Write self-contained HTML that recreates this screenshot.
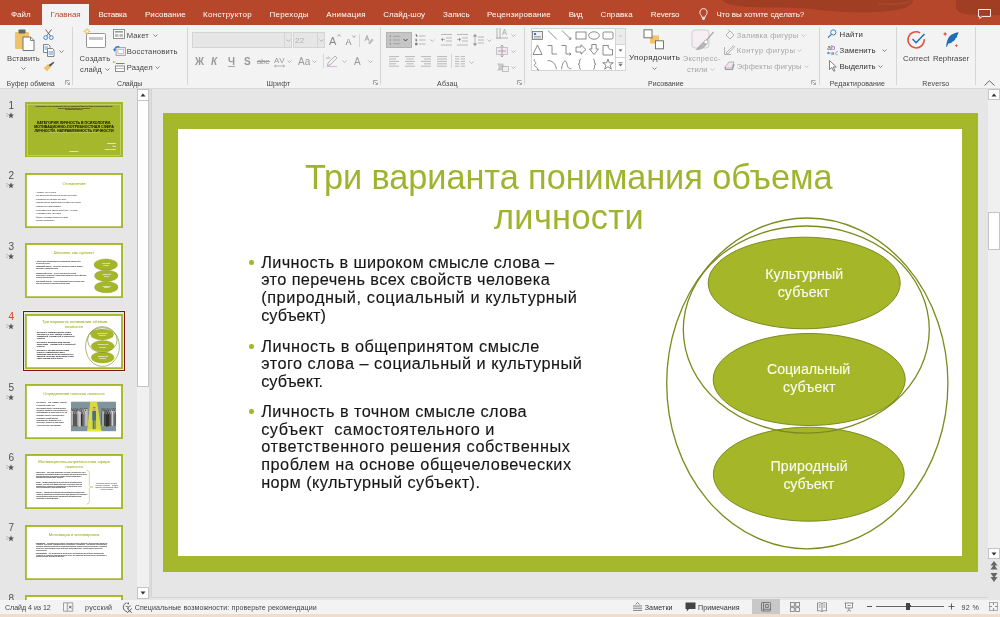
<!DOCTYPE html><html><head><meta charset="utf-8"><title>PowerPoint</title><style>
*{margin:0;padding:0;box-sizing:border-box}
html,body{width:1000px;height:617px;overflow:hidden;background:#e6e6e6;font-family:"Liberation Sans",sans-serif}
.a{position:absolute}
.t{position:absolute;white-space:pre;line-height:1}
#root{position:absolute;left:0;top:0;width:1000px;height:617px;will-change:transform}
svg{position:absolute;overflow:visible}
</style></head><body><div id="root">
<div class="a" style="left:0;top:0;width:1000px;height:25px;background:#b7472a"></div>
<svg style="left:0;top:0" width="1000" height="25" viewBox="0 0 1000 25">
<g fill="#000" fill-opacity="0.12">
<path d="M722 0 C726 5 740 7.5 765 7.5 C790 7.5 805 8 825 10.5 C850 13 880 13.5 900 9.5 C910 7 913 3 913 0 Z"/>
<path d="M956 0 H1000 V15 C990 15.5 975 15 965 14 C958 13 955 9 956 5 Z"/>
</g><path d="M878 3.5 C890 5 905 4 911 1" fill="none" stroke="#fff" stroke-opacity="0.06" stroke-width="1.5"/></svg>
<div class="a" style="left:42px;top:4px;width:47px;height:22px;background:#f3f3f3"></div>
<div class="a" style="left:0;top:25px;width:1000px;height:63px;background:#f3f3f3"></div>
<div class="a" style="left:0;top:88px;width:1000px;height:1px;background:#d9d9d9"></div>
<div class="t " style="letter-spacing:-0.024px;left:11.00px;top:10.93px;font-size:8px;color:#fff;">Файл</div>
<div class="t " style="letter-spacing:-0.189px;left:98.40px;top:10.93px;font-size:8px;color:#fff;">Вставка</div>
<div class="t " style="letter-spacing:0.038px;left:145.00px;top:10.93px;font-size:8px;color:#fff;">Рисование</div>
<div class="t " style="letter-spacing:0.298px;left:203.00px;top:10.93px;font-size:8px;color:#fff;">Конструктор</div>
<div class="t " style="letter-spacing:0.224px;left:269.50px;top:10.93px;font-size:8px;color:#fff;">Переходы</div>
<div class="t " style="letter-spacing:0.248px;left:326.30px;top:10.93px;font-size:8px;color:#fff;">Анимация</div>
<div class="t " style="letter-spacing:0.039px;left:383.30px;top:10.93px;font-size:8px;color:#fff;">Слайд-шоу</div>
<div class="t " style="letter-spacing:0.070px;left:443.00px;top:10.93px;font-size:8px;color:#fff;">Запись</div>
<div class="t " style="letter-spacing:0.140px;left:487.00px;top:10.93px;font-size:8px;color:#fff;">Рецензирование</div>
<div class="t " style="letter-spacing:-0.342px;left:568.80px;top:10.93px;font-size:8px;color:#fff;">Вид</div>
<div class="t " style="letter-spacing:0.118px;left:600.50px;top:10.93px;font-size:8px;color:#fff;">Справка</div>
<div class="t " style="letter-spacing:-0.199px;left:650.80px;top:10.93px;font-size:8px;color:#fff;">Reverso</div>
<div class="t " style="letter-spacing:-0.076px;left:50.60px;top:10.93px;font-size:8px;color:#b7472a;">Главная</div>
<div class="t " style="letter-spacing:-0.026px;left:716.40px;top:10.93px;font-size:8px;color:#fff;">Что вы хотите сделать?</div>
<svg style="left:699px;top:8px" width="10" height="12" viewBox="0 0 10 12"><path d="M4.5 0.6 C2.3 0.6 0.9 2.3 0.9 4.3 C0.9 6 2 6.9 2.6 8.1 L2.8 9.3 L6.2 9.3 L6.4 8.1 C7 6.9 8.1 6 8.1 4.3 C8.1 2.3 6.7 0.6 4.5 0.6 Z M3 10.4 L6 10.4 M3.5 11.4 L5.5 11.4" fill="none" stroke="#fff" stroke-width="0.9"/></svg>
<svg style="left:978px;top:9px" width="14" height="10" viewBox="0 0 14 10"><path d="M0.5 0.5 H12.5 V7.5 H4 L1.8 9.5 V7.5 H0.5 Z" fill="none" stroke="#fff" stroke-width="0.9"/></svg>
<svg style="left:14px;top:28px" width="22" height="24" viewBox="0 0 22 24">
<rect x="1" y="4" width="14" height="17" rx="1" fill="#f0c36b"/>
<rect x="4.5" y="1.5" width="7" height="4" rx="0.8" fill="#666"/>
<path d="M9 9 H16.5 L20 12.5 V22.5 H9 Z" fill="#fff" stroke="#666" stroke-width="0.9"/>
<path d="M16.5 9 V12.5 H20" fill="none" stroke="#666" stroke-width="0.8"/>
</svg>
<div class="t " style="letter-spacing:0.085px;left:7.00px;top:54.77px;font-size:7.6px;color:#444;">Вставить</div>
<svg style="left:21px;top:67.1px" width="5" height="3" viewBox="0 0 5 3"><path d="M0.5 0.5 L2.5 2.5 L4.5 0.5" fill="none" stroke="#666" stroke-width="0.8"/></svg>
<svg style="left:43px;top:29px" width="11" height="11" viewBox="0 0 11 11"><path d="M2.5 0.5 L7.5 7 M8.5 0.5 L3.5 7" stroke="#555" stroke-width="0.9" fill="none"/><circle cx="2.7" cy="8.6" r="1.9" fill="none" stroke="#2b7cd3" stroke-width="0.9"/><circle cx="8.3" cy="8.6" r="1.9" fill="none" stroke="#2b7cd3" stroke-width="0.9"/></svg>
<svg style="left:43px;top:44px" width="12" height="13" viewBox="0 0 12 13"><path d="M0.5 0.5 H5.5 L7 2 V8.5 H0.5 Z" fill="#fff" stroke="#666" stroke-width="0.8"/><path d="M4.5 4.5 H9.5 L11 6 V12.5 H4.5 Z" fill="#fff" stroke="#666" stroke-width="0.8"/><path d="M5.5 8 H10 M5.5 10 H10" stroke="#2b7cd3" stroke-width="0.8"/><path d="M1.5 3 H5 M1.5 5 H4" stroke="#2b7cd3" stroke-width="0.8"/></svg>
<svg style="left:59px;top:50.0px" width="5" height="3" viewBox="0 0 5 3"><path d="M0.5 0.5 L2.5 2.5 L4.5 0.5" fill="none" stroke="#666" stroke-width="0.8"/></svg>
<svg style="left:43px;top:61px" width="12" height="11" viewBox="0 0 12 11"><path d="M0.5 7 L5 3 L8 6 L4 10.5 Z" fill="#f0c36b"/><path d="M5.5 4 L10.5 0.8 L11.3 1.8 L7.2 5.8 Z" fill="#555"/></svg>
<div class="t " style="letter-spacing:0.029px;left:6.80px;top:79.77px;font-size:7px;color:#444;">Буфер обмена</div>
<svg style="left:65px;top:80px" width="5" height="5" viewBox="0 0 5 5"><path d="M0.5 4.5 V0.5 H4.5 M1.5 1.5 L4.2 4.2 M4.5 2.5 V4.5 H2.5" fill="none" stroke="#888" stroke-width="0.7"/></svg>
<div class="a" style="left:72px;top:27px;width:1px;height:58px;background:#d6d6d6"></div>
<svg style="left:83px;top:28px" width="24" height="21" viewBox="0 0 24 21">
<rect x="3.5" y="5.5" width="19" height="14" rx="1" fill="#fff" stroke="#888" stroke-width="0.9"/>
<rect x="6" y="9" width="14" height="3" fill="#c8c8c8"/>
<g stroke="#eeb64a" stroke-width="0.8"><path d="M4 0 V7 M0.5 3.5 H7.5 M1.5 1 L6.5 6 M6.5 1 L1.5 6"/></g><circle cx="4" cy="3.5" r="1.6" fill="#fff" stroke="#eeb64a" stroke-width="0.7"/>
</svg>
<div class="t " style="letter-spacing:0.290px;left:79.50px;top:54.77px;font-size:7.6px;color:#444;">Создать</div>
<div class="t " style="letter-spacing:0.119px;left:80.00px;top:65.77px;font-size:7.6px;color:#444;">слайд</div>
<svg style="left:104.5px;top:68.1px" width="5" height="3" viewBox="0 0 5 3"><path d="M0.5 0.5 L2.5 2.5 L4.5 0.5" fill="none" stroke="#666" stroke-width="0.8"/></svg>
<svg style="left:113px;top:29px" width="12" height="10" viewBox="0 0 12 10"><rect x="0.5" y="0.5" width="11" height="9" fill="#fff" stroke="#777" stroke-width="0.8"/><rect x="2" y="2" width="8" height="1.6" fill="#999"/><rect x="2" y="5" width="3.5" height="3" fill="#bbb"/><rect x="6.5" y="5" width="3.5" height="3" fill="#bbb"/></svg>
<div class="t " style="letter-spacing:0.150px;left:126.70px;top:31.77px;font-size:7.6px;color:#444;">Макет</div>
<svg style="left:152.5px;top:34.3px" width="5" height="3" viewBox="0 0 5 3"><path d="M0.5 0.5 L2.5 2.5 L4.5 0.5" fill="none" stroke="#666" stroke-width="0.8"/></svg>
<svg style="left:113px;top:45px" width="13" height="11" viewBox="0 0 13 11"><rect x="3" y="2.5" width="9.5" height="8" fill="#e8e8e8" stroke="#999" stroke-width="0.8"/><rect x="5" y="4.5" width="5.5" height="4" fill="#fff" stroke="#aaa" stroke-width="0.6"/><path d="M1.5 5.5 C1.5 2.5 3.5 1 6.5 1.8" fill="none" stroke="#2b7cd3" stroke-width="1.2"/><path d="M0 4 L1.6 6.8 L3.4 4.2 Z" fill="#2b7cd3"/></svg>
<div class="t " style="letter-spacing:0.205px;left:126.70px;top:47.77px;font-size:7.6px;color:#444;">Восстановить</div>
<svg style="left:113px;top:61px" width="12" height="11" viewBox="0 0 12 11"><rect x="2.5" y="5" width="9" height="5.5" fill="#fff" stroke="#777" stroke-width="0.8"/><path d="M0.5 1 H2.5 M0.5 0 V2" stroke="#f0a04b" stroke-width="0.9"/><path d="M3 2.5 H11.5" stroke="#e25b3a" stroke-width="1"/><path d="M3 7.5 H11" stroke="#999" stroke-width="0.7"/></svg>
<div class="t " style="letter-spacing:0.158px;left:126.70px;top:64.07px;font-size:7.6px;color:#444;">Раздел</div>
<svg style="left:155px;top:66.1px" width="5" height="3" viewBox="0 0 5 3"><path d="M0.5 0.5 L2.5 2.5 L4.5 0.5" fill="none" stroke="#666" stroke-width="0.8"/></svg>
<div class="t " style="letter-spacing:-0.152px;left:117.00px;top:79.77px;font-size:7px;color:#444;">Слайды</div>
<div class="a" style="left:187px;top:27px;width:1px;height:58px;background:#d6d6d6"></div>
<div class="a" style="left:192px;top:32px;width:100px;height:16px;background:#e6e6e6;border:1px solid #d4d4d4"></div>
<div class="a" style="left:283.5px;top:32px;width:1px;height:16px;background:#d4d4d4"></div>
<svg style="left:285.8px;top:39.0px" width="5" height="3" viewBox="0 0 5 3"><path d="M0.5 0.5 L2.5 2.5 L4.5 0.5" fill="none" stroke="#aaa" stroke-width="0.8"/></svg>
<div class="a" style="left:293px;top:32px;width:31.6px;height:16px;background:#e6e6e6;border:1px solid #d4d4d4"></div>
<div class="a" style="left:316.5px;top:32px;width:1px;height:16px;background:#d4d4d4"></div>
<svg style="left:318.5px;top:39.0px" width="5" height="3" viewBox="0 0 5 3"><path d="M0.5 0.5 L2.5 2.5 L4.5 0.5" fill="none" stroke="#aaa" stroke-width="0.8"/></svg>
<div class="t " style="letter-spacing:0.294px;left:295.00px;top:37.43px;font-size:8px;color:#b0b0b0;">22</div>
<div class="t " style="letter-spacing:1.256px;left:329.00px;top:36.39px;font-size:11px;color:#888;">A</div>
<div class="t " style="letter-spacing:1.584px;left:345.50px;top:38.08px;font-size:9px;color:#888;">A</div>
<svg style="left:337px;top:34px" width="4" height="3"><path d="M0.5 2.5 L2 0.5 L3.5 2.5" fill="none" stroke="#888" stroke-width="0.7"/></svg>
<svg style="left:352px;top:35px" width="4" height="3"><path d="M0.5 0.5 L2 2.5 L3.5 0.5" fill="none" stroke="#888" stroke-width="0.7"/></svg>
<div class="a" style="left:358.5px;top:34px;width:1px;height:13px;background:#d6d6d6"></div>
<svg style="left:364px;top:35px" width="10" height="10" viewBox="0 0 10 10"><path d="M1 6 L3 0.5 L5 6 M1.8 4 H4.2" fill="none" stroke="#999" stroke-width="0.8"/><path d="M4 8 L8 3.5 L9.5 5 L6 9.5 Z" fill="#bbb"/></svg>
<div class="t " style="letter-spacing:1.553px;left:195.00px;top:57.23px;font-size:10px;color:#999;font-weight:700;">Ж</div>
<div class="t " style="letter-spacing:2.444px;left:211.00px;top:57.23px;font-size:10px;color:#999;font-weight:700;font-style:italic;">К</div>
<div class="t " style="letter-spacing:0.369px;left:228.00px;top:56.53px;font-size:10px;color:#999;font-weight:700;">Ч</div>
<div class="a" style="left:228px;top:65.6px;width:7px;height:0.8px;background:#aaa"></div>
<div class="t " style="letter-spacing:0.428px;left:244.00px;top:57.23px;font-size:10px;color:#999;font-weight:700;">S</div>
<div class="t " style="letter-spacing:-0.380px;left:257.00px;top:57.93px;font-size:8px;color:#999;">abe</div>
<div class="a" style="left:256.5px;top:61px;width:13px;height:0.8px;background:#999"></div>
<div class="t " style="letter-spacing:0.522px;left:274.00px;top:56.93px;font-size:8px;color:#999;">AV</div>
<svg style="left:274px;top:64px" width="11" height="4" viewBox="0 0 11 4"><path d="M0.5 2 H10.5 M0.5 2 L2 0.8 M0.5 2 L2 3.2 M10.5 2 L9 0.8 M10.5 2 L9 3.2" fill="none" stroke="#999" stroke-width="0.7"/></svg>
<svg style="left:287px;top:60.3px" width="5" height="3" viewBox="0 0 5 3"><path d="M0.5 0.5 L2.5 2.5 L4.5 0.5" fill="none" stroke="#aaa" stroke-width="0.8"/></svg>
<div class="t " style="letter-spacing:-0.034px;left:298.00px;top:57.23px;font-size:10px;color:#999;">Aa</div>
<svg style="left:312.4px;top:60.3px" width="5" height="3" viewBox="0 0 5 3"><path d="M0.5 0.5 L2.5 2.5 L4.5 0.5" fill="none" stroke="#aaa" stroke-width="0.8"/></svg>
<div class="a" style="left:322.6px;top:54px;width:1px;height:14px;background:#d6d6d6"></div>
<svg style="left:326px;top:55px" width="12" height="12" viewBox="0 0 12 12"><path d="M2 8 L9 1 L11 3 L4 10 L1.5 10.5 Z" fill="none" stroke="#aaa" stroke-width="0.9"/><path d="M0.5 11.5 H11" stroke="#d9b8d9" stroke-width="1"/><text x="0" y="4" font-size="4" fill="#aaa" font-family="Liberation Sans">ab</text></svg>
<svg style="left:342px;top:60.3px" width="5" height="3" viewBox="0 0 5 3"><path d="M0.5 0.5 L2.5 2.5 L4.5 0.5" fill="none" stroke="#aaa" stroke-width="0.8"/></svg>
<div class="t " style="letter-spacing:1.428px;left:354.00px;top:57.23px;font-size:10px;color:#999;">A</div>
<svg style="left:368px;top:60.3px" width="5" height="3" viewBox="0 0 5 3"><path d="M0.5 0.5 L2.5 2.5 L4.5 0.5" fill="none" stroke="#aaa" stroke-width="0.8"/></svg>
<div class="t " style="letter-spacing:0.192px;left:266.40px;top:79.77px;font-size:7px;color:#444;">Шрифт</div>
<svg style="left:373px;top:80px" width="5" height="5" viewBox="0 0 5 5"><path d="M0.5 4.5 V0.5 H4.5 M1.5 1.5 L4.2 4.2 M4.5 2.5 V4.5 H2.5" fill="none" stroke="#888" stroke-width="0.7"/></svg>
<div class="a" style="left:380.4px;top:27px;width:1px;height:58px;background:#d6d6d6"></div>
<div class="a" style="left:386px;top:32px;width:26px;height:16px;background:#c6c6c6;border:1px solid #b3b3b3"></div>
<svg style="left:388px;top:34px" width="22" height="12" viewBox="0 0 22 12"><g fill="#999"><rect x="1.5" y="1.5" width="1.6" height="1.6"/><rect x="1.5" y="5.2" width="1.6" height="1.6"/><rect x="1.5" y="8.9" width="1.6" height="1.6"/></g><g stroke="#999" stroke-width="0.8"><path d="M5 2.3 H12 M5 6 H12 M5 9.7 H12"/></g><path d="M15.5 5 L17.5 7 L19.5 5" fill="none" stroke="#444" stroke-width="1"/></svg>
<svg style="left:414.5px;top:34px" width="11" height="12" viewBox="0 0 11 12"><g stroke="#aaa" stroke-width="0.8"><path d="M4 2 H10.5 M4 6 H10.5 M4 10 H10.5 M0.5 0.8 H2 V3 M0.3 5 H2 L0.5 7 H2.3 M0.5 9 H2.2 V11 H0.5 M0.5 10 H2"/></g></svg>
<svg style="left:430.4px;top:39.3px" width="5" height="3" viewBox="0 0 5 3"><path d="M0.5 0.5 L2.5 2.5 L4.5 0.5" fill="none" stroke="#aaa" stroke-width="0.8"/></svg>
<svg style="left:441px;top:34px" width="11" height="12" viewBox="0 0 11 12"><g stroke="#aaa" stroke-width="0.8"><path d="M0 0.5 H11 M5 4 H11 M5 7 H11 M0 11 H11 M4 5.5 H0.8"/></g><path d="M0 5.5 L2 3.8 L2 7.2 Z" fill="#888"/></svg>
<svg style="left:457px;top:34px" width="11" height="12" viewBox="0 0 11 12"><g stroke="#aaa" stroke-width="0.8"><path d="M0 0.5 H11 M5 4 H11 M5 7 H11 M0 11 H11 M0 5.5 H3"/></g><path d="M4 5.5 L2 3.8 L2 7.2 Z" fill="#888"/></svg>
<svg style="left:473px;top:34px" width="11" height="12" viewBox="0 0 11 12"><g stroke="#aaa" stroke-width="0.8"><path d="M5 3 H11 M5 6 H11 M5 9 H11 M2 1.5 V10.5"/></g><path d="M2 0 L0 2.5 H4 Z M2 12 L0 9.5 H4 Z" fill="#888"/></svg>
<svg style="left:486.7px;top:39.3px" width="5" height="3" viewBox="0 0 5 3"><path d="M0.5 0.5 L2.5 2.5 L4.5 0.5" fill="none" stroke="#aaa" stroke-width="0.8"/></svg>
<svg style="left:389px;top:55.5px" width="10" height="11" viewBox="0 0 10 11"><g stroke="#aaa" stroke-width="0.8"><path d="M0 0.6 H10"/><path d="M0 3.0 H7"/><path d="M0 5.3999999999999995 H10"/><path d="M0 7.799999999999999 H7"/><path d="M0 10.2 H10"/></g></svg>
<svg style="left:405px;top:55.5px" width="10" height="11" viewBox="0 0 10 11"><g stroke="#aaa" stroke-width="0.8"><path d="M0.0 0.6 H10.0"/><path d="M1.5 3.0 H8.5"/><path d="M0.0 5.3999999999999995 H10.0"/><path d="M1.5 7.799999999999999 H8.5"/><path d="M0.0 10.2 H10.0"/></g></svg>
<svg style="left:421px;top:55.5px" width="10" height="11" viewBox="0 0 10 11"><g stroke="#aaa" stroke-width="0.8"><path d="M0 0.6 H10"/><path d="M3 3.0 H10"/><path d="M0 5.3999999999999995 H10"/><path d="M3 7.799999999999999 H10"/><path d="M0 10.2 H10"/></g></svg>
<svg style="left:436.5px;top:55.5px" width="10" height="11" viewBox="0 0 10 11"><g stroke="#aaa" stroke-width="0.8"><path d="M0 0.6 H10"/><path d="M0 3.0 H10"/><path d="M0 5.3999999999999995 H10"/><path d="M0 7.799999999999999 H10"/><path d="M0 10.2 H10"/></g></svg>
<div class="a" style="left:450.5px;top:54px;width:1px;height:14px;background:#d6d6d6"></div>
<svg style="left:455px;top:55.5px" width="10" height="11" viewBox="0 0 10 11"><g stroke="#aaa" stroke-width="0.8"><path d="M0 0.6 H4.3 M0 3 H4.3 M0 5.4 H4.3 M0 7.8 H4.3 M0 10.2 H4.3 M5.7 0.6 H10 M5.7 3 H10 M5.7 5.4 H10 M5.7 7.8 H10 M5.7 10.2 H10"/></g></svg>
<svg style="left:468.6px;top:60.8px" width="5" height="3" viewBox="0 0 5 3"><path d="M0.5 0.5 L2.5 2.5 L4.5 0.5" fill="none" stroke="#aaa" stroke-width="0.8"/></svg>
<svg style="left:496px;top:28px" width="12" height="12" viewBox="0 0 12 12"><g stroke="#aaa" stroke-width="0.9"><path d="M1 0 V11 M4 0 V11 M0 10 H12"/></g><path d="M6.5 7 L8.5 1 L10.5 7 M7.2 5 H9.8" fill="none" stroke="#aaa" stroke-width="0.8"/></svg>
<svg style="left:511px;top:33.8px" width="5" height="3" viewBox="0 0 5 3"><path d="M0.5 0.5 L2.5 2.5 L4.5 0.5" fill="none" stroke="#aaa" stroke-width="0.8"/></svg>
<svg style="left:496px;top:45px" width="12" height="12" viewBox="0 0 12 12"><rect x="0.5" y="2.5" width="11" height="7" fill="#f3e6f0" stroke="#bbb" stroke-width="0.8"/><path d="M6 0 V12 M4.5 1.5 L6 0 L7.5 1.5 M4.5 10.5 L6 12 L7.5 10.5 M2 6 H10" fill="none" stroke="#999" stroke-width="0.8"/></svg>
<svg style="left:511px;top:49.8px" width="5" height="3" viewBox="0 0 5 3"><path d="M0.5 0.5 L2.5 2.5 L4.5 0.5" fill="none" stroke="#aaa" stroke-width="0.8"/></svg>
<svg style="left:496.5px;top:63px" width="12" height="9" viewBox="0 0 12 9"><path d="M0 0.5 H6 L8 4 L6 7.5 H0 L2 4 Z" fill="#c8c8c8"/><rect x="5.5" y="3.5" width="6" height="5" fill="#eee" stroke="#aaa" stroke-width="0.7"/></svg>
<svg style="left:511px;top:66.3px" width="5" height="3" viewBox="0 0 5 3"><path d="M0.5 0.5 L2.5 2.5 L4.5 0.5" fill="none" stroke="#aaa" stroke-width="0.8"/></svg>
<div class="t " style="letter-spacing:0.240px;left:437.00px;top:79.77px;font-size:7px;color:#444;">Абзац</div>
<svg style="left:516.5px;top:80px" width="5" height="5" viewBox="0 0 5 5"><path d="M0.5 4.5 V0.5 H4.5 M1.5 1.5 L4.2 4.2 M4.5 2.5 V4.5 H2.5" fill="none" stroke="#888" stroke-width="0.7"/></svg>
<div class="a" style="left:524.4px;top:27px;width:1px;height:58px;background:#d6d6d6"></div>
<div class="a" style="left:530.8px;top:28.3px;width:95px;height:42.7px;background:#fff;border:1px solid #d4d4d4"></div>
<div class="a" style="left:615.3px;top:28.3px;width:1px;height:42.7px;background:#d4d4d4"></div>
<div class="a" style="left:616.3px;top:29.3px;width:8.5px;height:14.5px;background:#ececec"></div>
<div class="a" style="left:616.3px;top:43.5px;width:8.5px;height:1px;background:#d4d4d4"></div>
<div class="a" style="left:616.3px;top:57.2px;width:8.5px;height:1px;background:#d4d4d4"></div>
<svg style="left:618px;top:34px" width="5" height="3"><path d="M0.5 2.5 L2.5 0.5 L4.5 2.5" fill="#ccc"/></svg>
<svg style="left:618px;top:49px" width="5" height="3"><path d="M0.5 0.5 L2.5 2.5 L4.5 0.5 Z" fill="#555"/></svg>
<svg style="left:618px;top:61.5px" width="5" height="5"><path d="M0.5 0.8 H4.5" stroke="#555" stroke-width="0.8"/><path d="M0.5 2.3 L2.5 4.3 L4.5 2.3 Z" fill="#555"/></svg>
<svg style="left:531px;top:28px" width="85" height="43" viewBox="0 0 85 43"><g fill="none" stroke="#666" stroke-width="0.75">
<rect x="1.5" y="3.5" width="10" height="8" fill="#eee"/><rect x="3" y="5" width="2" height="2" fill="#2b7cd3" stroke="none"/><path d="M3 8.5 H10 M3 10 H10" stroke="#999"/>
<path d="M17 2.5 L26 11.5"/>
<path d="M31 2.5 L39.5 11 M37.8 11.3 L39.8 11.3 L39.8 9.3"/>
<rect x="45" y="4" width="10" height="7"/>
<ellipse cx="63" cy="7.5" rx="5.3" ry="3.7"/>
<rect x="72" y="4" width="10" height="7" rx="1.2"/>
<g transform="translate(0,1)"><path d="M2 25.5 L6.5 16 L11 25.5 Z"/>
<path d="M16.5 16.5 H21 V25 H26"/>
<path d="M30.5 16.5 H35 V25 H40 M38.5 23.5 L40 25 L38.5 26.5"/>
<path d="M45 18 H50 V15.8 L55 20.5 L50 25.2 V23 H45 Z"/>
<path d="M60.8 15.5 H65.2 V20 H67.5 L63 25.5 L58.5 20 H60.8 Z"/>
<path d="M72 16.5 H77.5 C76.5 19 78.5 21 81.5 20.5 V26 H72 Z"/>
</g>
<g transform="translate(0,1.2)"><path d="M4 30 C1 32 7 33 4 35 C1 37 8 38 6 40 M6 40 L8 41"/>
<path d="M16.5 31.5 C21 31 24.5 34 25.5 40"/>
<path d="M30.5 40 C32 30 35 30 36 35 C37 40 39 40 40.5 39"/>
<path d="M50 30 C48.5 30 48.5 31 48.5 33 C48.5 35 47.5 35 47 35 C47.5 35 48.5 35 48.5 37 C48.5 39 48.5 40 50 40"/>
<path d="M62 30 C63.5 30 63.5 31 63.5 33 C63.5 35 64.5 35 65 35 C64.5 35 63.5 35 63.5 37 C63.5 39 63.5 40 62 40"/>
<path d="M77 29.8 L78.3 33.6 L82.3 33.6 L79.1 36 L80.3 39.9 L77 37.5 L73.7 39.9 L74.9 36 L71.7 33.6 L75.7 33.6 Z"/>
</g></g></svg>
<svg style="left:643px;top:29px" width="22" height="21" viewBox="0 0 22 21"><rect x="7" y="6.5" width="9" height="8" fill="#f0c36b"/><rect x="1" y="0.8" width="8" height="8" fill="#fff" stroke="#666" stroke-width="0.9"/><rect x="12.5" y="11.8" width="8" height="8" fill="#fff" stroke="#666" stroke-width="0.9"/></svg>
<div class="t " style="letter-spacing:0.329px;left:629.00px;top:54.43px;font-size:8px;color:#333;">Упорядочить</div>
<svg style="left:652px;top:67.2px" width="5" height="3" viewBox="0 0 5 3"><path d="M0.5 0.5 L2.5 2.5 L4.5 0.5" fill="none" stroke="#666" stroke-width="0.8"/></svg>
<svg style="left:691px;top:29px" width="24" height="22" viewBox="0 0 24 22"><rect x="1" y="1" width="17" height="18" rx="3" fill="#f6eef3" stroke="#ccc" stroke-width="0.9"/><path d="M22.5 3 L14 13 M14 13 C11 13.5 10 16 6 20.5 C12 20 14 17 15.5 14.5" fill="#bbb" stroke="#aaa" stroke-width="1.2"/><circle cx="15" cy="13" r="2" fill="#fff" stroke="#aaa" stroke-width="0.8"/></svg>
<div class="t " style="letter-spacing:0.282px;left:682.70px;top:54.77px;font-size:7.6px;color:#a6a6a6;">Экспресс-</div>
<div class="t " style="letter-spacing:0.099px;left:687.00px;top:65.77px;font-size:7.6px;color:#a6a6a6;">стили</div>
<svg style="left:710px;top:68.1px" width="5" height="3" viewBox="0 0 5 3"><path d="M0.5 0.5 L2.5 2.5 L4.5 0.5" fill="none" stroke="#bbb" stroke-width="0.8"/></svg>
<svg style="left:724.5px;top:28.5px" width="10" height="11" viewBox="0 0 10 11"><path d="M1 6 L5 2 L9 6 L5 10 Z" fill="none" stroke="#aaa" stroke-width="0.9"/><path d="M3 0.5 L5 2.5" stroke="#aaa" stroke-width="0.9"/></svg>
<div class="t " style="letter-spacing:0.277px;left:736.70px;top:31.57px;font-size:7.6px;color:#a6a6a6;">Заливка фигуры</div>
<svg style="left:801px;top:34.099999999999994px" width="5" height="3" viewBox="0 0 5 3"><path d="M0.5 0.5 L2.5 2.5 L4.5 0.5" fill="none" stroke="#bbb" stroke-width="0.8"/></svg>
<svg style="left:723.5px;top:44.5px" width="11" height="10" viewBox="0 0 11 10"><path d="M0.5 2 V9.5 H7" fill="none" stroke="#aaa" stroke-width="0.9"/><path d="M2 8 L9.5 0.8 L10.5 1.8 L3.5 9 Z" fill="#fff" stroke="#999" stroke-width="0.8"/></svg>
<div class="t " style="letter-spacing:0.424px;left:736.70px;top:46.87px;font-size:7.6px;color:#a6a6a6;">Контур фигуры</div>
<svg style="left:797px;top:49.3px" width="5" height="3" viewBox="0 0 5 3"><path d="M0.5 0.5 L2.5 2.5 L4.5 0.5" fill="none" stroke="#bbb" stroke-width="0.8"/></svg>
<svg style="left:723.5px;top:60.5px" width="11" height="10" viewBox="0 0 11 10"><path d="M1 6 L5 1 H10 L8 7 H2 Z" fill="#f3e6f0" stroke="#aaa" stroke-width="0.8"/><path d="M1 6 L1.5 8.5 H8.5 L10 3" fill="none" stroke="#999" stroke-width="1.2"/></svg>
<div class="t " style="letter-spacing:0.123px;left:736.70px;top:63.07px;font-size:7.6px;color:#a6a6a6;">Эффекты фигуры</div>
<svg style="left:804px;top:65.3px" width="5" height="3" viewBox="0 0 5 3"><path d="M0.5 0.5 L2.5 2.5 L4.5 0.5" fill="none" stroke="#bbb" stroke-width="0.8"/></svg>
<div class="t " style="letter-spacing:0.042px;left:648.00px;top:79.77px;font-size:7px;color:#444;">Рисование</div>
<svg style="left:810.5px;top:80px" width="5" height="5" viewBox="0 0 5 5"><path d="M0.5 4.5 V0.5 H4.5 M1.5 1.5 L4.2 4.2 M4.5 2.5 V4.5 H2.5" fill="none" stroke="#888" stroke-width="0.7"/></svg>
<div class="a" style="left:818.5px;top:27px;width:1px;height:58px;background:#d6d6d6"></div>
<svg style="left:827px;top:28.5px" width="10" height="10" viewBox="0 0 10 10"><circle cx="6.3" cy="3.4" r="2.6" fill="none" stroke="#2e75b6" stroke-width="0.9"/><path d="M4.4 5.3 L1 8.7" stroke="#2e75b6" stroke-width="1.2"/></svg>
<div class="t " style="letter-spacing:0.238px;left:839.60px;top:31.30px;font-size:7.8px;color:#333;">Найти</div>
<svg style="left:826.5px;top:43.5px" width="12" height="12" viewBox="0 0 12 12"><text x="0.3" y="6.3" font-size="6.5" fill="#555" font-family="Liberation Sans">a</text><text x="4" y="6.3" font-size="7.5" fill="#7b4fb5" font-family="Liberation Sans">b</text><text x="4" y="11" font-size="6" fill="#666" font-family="Liberation Sans">a</text><path d="M10.8 7.6 C9.2 7.4 8.6 8.5 8.6 9.3 C8.6 10.2 9.4 11 10.8 10.8" fill="none" stroke="#5b9bd5" stroke-width="0.8"/><path d="M0.5 9 H3.5 M0.5 9 L2 8 M0.5 9 L2 10" fill="none" stroke="#2e75b6" stroke-width="0.8"/></svg>
<div class="t " style="letter-spacing:0.136px;left:839.60px;top:47.40px;font-size:7.8px;color:#333;">Заменить</div>
<svg style="left:882.4px;top:49.3px" width="5" height="3" viewBox="0 0 5 3"><path d="M0.5 0.5 L2.5 2.5 L4.5 0.5" fill="none" stroke="#666" stroke-width="0.8"/></svg>
<svg style="left:828.5px;top:59.5px" width="8" height="12" viewBox="0 0 8 12"><path d="M0.5 0.5 V9.5 L2.8 7.5 L4.8 11.3 L6 10.7 L4.2 7 H7.3 Z" fill="#fff" stroke="#666" stroke-width="0.8"/></svg>
<div class="t " style="letter-spacing:0.002px;left:839.60px;top:63.10px;font-size:7.8px;color:#333;">Выделить</div>
<svg style="left:877.8px;top:65.3px" width="5" height="3" viewBox="0 0 5 3"><path d="M0.5 0.5 L2.5 2.5 L4.5 0.5" fill="none" stroke="#666" stroke-width="0.8"/></svg>
<div class="t " style="letter-spacing:0.144px;left:829.80px;top:79.77px;font-size:7px;color:#444;">Редактирование</div>
<div class="a" style="left:895.5px;top:27px;width:1px;height:58px;background:#d6d6d6"></div>
<svg style="left:906px;top:29.5px" width="20" height="20" viewBox="0 0 20 20"><path d="M14.15 2.79 A8.1 8.1 0 1 0 18.17 9.09" fill="none" stroke="#e0513a" stroke-width="1.5"/><path d="M6.6 9.1 L10.1 12.7 L18.5 3.9" fill="none" stroke="#1f6fb6" stroke-width="1.5"/></svg>
<div class="t " style="letter-spacing:0.156px;left:902.90px;top:55.10px;font-size:7.8px;color:#444;">Correct</div>
<svg style="left:941px;top:30px" width="20" height="19" viewBox="0 0 20 19"><path d="M5.2 16.8 C5.6 11 7.2 6.2 10.8 4.4 C12.8 3.4 15.4 2.6 17.5 2.2 C17.3 3.8 16.9 4.8 16 5.5 C16.4 6.7 15.7 8 14.3 8.6 C14.4 9.9 13.3 11.1 11.6 11.4 C10.9 12.7 9.1 13.5 7.4 13.4 C6.8 14.6 6.3 15.8 5.9 16.9 Z" fill="#1f6fb6"/><path d="M4.1 1.8 L4.8 3.3 L6.3 4 L4.8 4.7 L4.1 6.2 L3.4 4.7 L1.9 4 L3.4 3.3 Z" fill="#e0513a"/><path d="M15.3 14 L15.9 15 L16.9 15.6 L15.9 16.2 L15.3 17.2 L14.7 16.2 L13.7 15.6 L14.7 15 Z" fill="#e0513a"/></svg>
<div class="t " style="letter-spacing:-0.013px;left:932.90px;top:55.10px;font-size:7.8px;color:#444;">Rephraser</div>
<div class="t " style="letter-spacing:0.137px;left:922.30px;top:79.77px;font-size:7px;color:#444;">Reverso</div>
<div class="a" style="left:975px;top:27px;width:1px;height:58px;background:#d6d6d6"></div>
<svg style="left:984px;top:80px" width="11" height="6" viewBox="0 0 11 6"><path d="M0.5 5.5 L5.5 0.8 L10.5 5.5" fill="none" stroke="#555" stroke-width="0.9"/></svg>
<div class="a" style="left:163px;top:113px;width:815px;height:458.8px">
<div class="a" style="left:0;top:0;width:815px;height:458.8px;background:#a5b72a"></div><div class="a" style="left:15.3px;top:16px;width:784px;height:427.3px;background:#fff"></div>
<div class="a" style="left:86.2px;top:147.4px;width:4.4px;height:4.4px;border-radius:50%;background:#a5b72a"></div><div class="a" style="left:86.2px;top:231.3px;width:4.4px;height:4.4px;border-radius:50%;background:#a5b72a"></div><div class="a" style="left:86.2px;top:296.3px;width:4.4px;height:4.4px;border-radius:50%;background:#a5b72a"></div>
<svg style="left:0;top:0" width="815" height="458.8" viewBox="0 0 815 458.8"><g fill="#a5b729" stroke="#7b8a1d" stroke-width="1"><ellipse cx="641.2" cy="170" rx="96" ry="45.8"/><ellipse cx="646.2" cy="266.5" rx="96" ry="46"/><ellipse cx="645.8" cy="361.2" rx="95.4" ry="47"/></g><g fill="none" stroke="#7b8a1d" stroke-width="1.3"><ellipse cx="644.3" cy="270.4" rx="140.6" ry="165.4"/><ellipse cx="643.3" cy="216.6" rx="123" ry="103.6"/></g></svg>
</div>
<div class="t " style="letter-spacing:-0.058px;left:305.00px;top:159.97px;font-size:34.3px;color:#9fb42c;">Три варианта понимания объема</div>
<div class="t " style="letter-spacing:0.360px;left:494.00px;top:200.17px;font-size:34.3px;color:#9fb42c;">личности</div>
<div class="t " style="letter-spacing:0.382px;left:261.20px;top:253.60px;font-size:16.3px;color:#161616;-webkit-text-stroke:0.12px #161616;">Личность в широком смысле слова –</div>
<div class="t " style="letter-spacing:0.410px;left:261.20px;top:271.10px;font-size:16.3px;color:#161616;-webkit-text-stroke:0.12px #161616;">это перечень всех свойств человека</div>
<div class="t " style="letter-spacing:0.592px;left:261.20px;top:288.70px;font-size:16.3px;color:#161616;-webkit-text-stroke:0.12px #161616;">(природный, социальный и культурный</div>
<div class="t " style="left:261.20px;top:306.50px;font-size:16.3px;color:#161616;-webkit-text-stroke:0.12px #161616;">субъект)</div>
<div class="t " style="letter-spacing:0.514px;left:261.20px;top:337.60px;font-size:16.3px;color:#161616;-webkit-text-stroke:0.12px #161616;">Личность в общепринятом смысле</div>
<div class="t " style="letter-spacing:0.493px;left:261.20px;top:355.20px;font-size:16.3px;color:#161616;-webkit-text-stroke:0.12px #161616;">этого слова – социальный и культурный</div>
<div class="t " style="left:261.20px;top:372.90px;font-size:16.3px;color:#161616;-webkit-text-stroke:0.12px #161616;">субъект.</div>
<div class="t " style="letter-spacing:0.429px;left:261.20px;top:402.70px;font-size:16.3px;color:#161616;-webkit-text-stroke:0.12px #161616;">Личность в точном смысле слова</div>
<div class="t " style="letter-spacing:0.543px;left:261.20px;top:420.50px;font-size:16.3px;color:#161616;-webkit-text-stroke:0.12px #161616;">субъект  самостоятельного и</div>
<div class="t " style="letter-spacing:0.605px;left:261.20px;top:438.20px;font-size:16.3px;color:#161616;-webkit-text-stroke:0.12px #161616;">ответственного решения собственных</div>
<div class="t " style="letter-spacing:0.527px;left:261.20px;top:455.80px;font-size:16.3px;color:#161616;-webkit-text-stroke:0.12px #161616;">проблем на основе общечеловеческих</div>
<div class="t " style="letter-spacing:0.424px;left:261.20px;top:473.50px;font-size:16.3px;color:#161616;-webkit-text-stroke:0.12px #161616;">норм (культурный субъект).</div>
<div class="t " style="letter-spacing:0.106px;left:765.20px;top:266.78px;font-size:14.2px;color:#fbfbf2;-webkit-text-stroke:0.12px #fbfbf2;">Культурный</div>
<div class="t " style="letter-spacing:0.046px;left:777.70px;top:284.58px;font-size:14.2px;color:#fbfbf2;-webkit-text-stroke:0.12px #fbfbf2;">субъект</div>
<div class="t " style="letter-spacing:-0.047px;left:767.00px;top:361.98px;font-size:14.2px;color:#fbfbf2;-webkit-text-stroke:0.12px #fbfbf2;">Социальный</div>
<div class="t " style="letter-spacing:0.129px;left:783.00px;top:379.78px;font-size:14.2px;color:#fbfbf2;-webkit-text-stroke:0.12px #fbfbf2;">субъект</div>
<div class="t " style="letter-spacing:0.173px;left:770.50px;top:458.98px;font-size:14.2px;color:#fbfbf2;-webkit-text-stroke:0.12px #fbfbf2;">Природный</div>
<div class="t " style="letter-spacing:-0.121px;left:783.40px;top:476.78px;font-size:14.2px;color:#fbfbf2;-webkit-text-stroke:0.12px #fbfbf2;">субъект</div>
<div class="a" style="left:24.8px;top:102.2px;width:815px;height:458.4px;transform:scale(0.12025);transform-origin:0 0;overflow:hidden"><div class="a" style="left:0;top:0;width:815px;height:458.4px;background:#a5b72a"></div><div class="a" style="left:17px;top:18px;width:781px;height:426px;border:3px solid #eef1d8"></div><div class="a" style="left:60px;top:30px;width:695px;font-size:11px;line-height:14px;color:#3d3d1a;-webkit-text-stroke:0.4px #3d3d1a;text-align:center">МИНИСТЕРСТВО НАУКИ И ВЫСШЕГО ОБРАЗОВАНИЯ РОССИЙСКОЙ ФЕДЕРАЦИИ ФЕДЕРАЛЬНОЕ ГОСУДАРСТВЕННОЕ БЮДЖЕТНОЕ ОБРАЗОВАТЕЛЬНОЕ УЧРЕЖДЕНИЕ<br>ВЫСШЕГО ОБРАЗОВАНИЯ</div><div class="a" style="left:50px;top:155px;width:715px;font-size:30px;line-height:33px;color:#1a1a0c;-webkit-text-stroke:0.4px #1a1a0c;text-align:center;font-weight:700">КАТЕГОРИЯ ЛИЧНОСТЬ В ПСИХОЛОГИИ.<br>МОТИВАЦИОННО-ПОТРЕБНОСТНАЯ СФЕРА<br>ЛИЧНОСТИ. НАПРАВЛЕННОСТЬ ЛИЧНОСТИ</div><div class="a" style="left:200px;top:253px;width:420px;height:2px;background:#eef1d8"></div><div class="a" style="left:520px;top:330px;width:237px;font-size:12px;line-height:25px;color:#fff;-webkit-text-stroke:0.4px #fff;text-align:right;font-weight:700">Выполнила:<br>ФИО<br>студент группы</div><div class="a" style="left:300px;top:408px;width:215px;font-size:12px;line-height:14px;color:#fff;-webkit-text-stroke:0.4px #fff;text-align:center;font-weight:700">Москва 2024</div></div>
<div class="t " style="left:8.50px;top:100.73px;font-size:10px;color:#505050;">1</div>
<svg style="left:6px;top:111.8px" width="8" height="7" viewBox="0 0 8 7"><path d="M5 0.3 L5.8 2.4 L8 2.5 L6.3 3.9 L6.9 6.2 L5 4.9 L3.1 6.2 L3.7 3.9 L2 2.5 L4.2 2.4 Z" fill="#555"/><path d="M0.3 1.5 H1.6 M0.5 3 H1.8 M0.3 4.5 H1.6" stroke="#888" stroke-width="0.5"/></svg>
<div class="a" style="left:24.8px;top:172.65px;width:815px;height:458.4px;transform:scale(0.12025);transform-origin:0 0;overflow:hidden"><div class="a" style="left:0;top:0;width:815px;height:458.4px;background:#a5b72a"></div><div class="a" style="left:15.3px;top:16px;width:784px;height:427px;background:#fff"></div><div class="t" style="left:0px;top:69px;font-size:34.3px;color:#9fb42c;width:815px;text-align:center;-webkit-text-stroke:0.4px #9fb42c">Оглавление</div><div class="a" style="left:83px;top:157.0px;width:5px;height:5px;border-radius:50%;background:#a5b72a"></div><div class="t" style="left:92px;top:150.0px;font-size:17px;color:#505050;-webkit-text-stroke:0.25px #505050">Человек, как субъект</div><div class="a" style="left:83px;top:186.75px;width:5px;height:5px;border-radius:50%;background:#a5b72a"></div><div class="t" style="left:92px;top:179.75px;font-size:17px;color:#505050;-webkit-text-stroke:0.25px #505050">Три варианта понимания объема личности</div><div class="a" style="left:83px;top:216.5px;width:5px;height:5px;border-radius:50%;background:#a5b72a"></div><div class="t" style="left:92px;top:209.5px;font-size:17px;color:#505050;-webkit-text-stroke:0.25px #505050">Определение понятия личность</div><div class="a" style="left:83px;top:246.25px;width:5px;height:5px;border-radius:50%;background:#a5b72a"></div><div class="t" style="left:92px;top:239.25px;font-size:17px;color:#505050;-webkit-text-stroke:0.25px #505050">Мотивационно-потребностная сфера личности</div><div class="a" style="left:83px;top:276.0px;width:5px;height:5px;border-radius:50%;background:#a5b72a"></div><div class="t" style="left:92px;top:269.0px;font-size:17px;color:#505050;-webkit-text-stroke:0.25px #505050">Мотивация и мотивировка</div><div class="a" style="left:83px;top:305.75px;width:5px;height:5px;border-radius:50%;background:#a5b72a"></div><div class="t" style="left:92px;top:298.75px;font-size:17px;color:#505050;-webkit-text-stroke:0.25px #505050">Классификация потребностей по А. Маслоу</div><div class="a" style="left:83px;top:335.5px;width:5px;height:5px;border-radius:50%;background:#a5b72a"></div><div class="t" style="left:92px;top:328.5px;font-size:17px;color:#505050;-webkit-text-stroke:0.25px #505050">Направленность личности</div><div class="a" style="left:83px;top:365.25px;width:5px;height:5px;border-radius:50%;background:#a5b72a"></div><div class="t" style="left:92px;top:358.25px;font-size:17px;color:#505050;-webkit-text-stroke:0.25px #505050">Формы направленности личности</div><div class="a" style="left:83px;top:395.0px;width:5px;height:5px;border-radius:50%;background:#a5b72a"></div><div class="t" style="left:92px;top:388.0px;font-size:17px;color:#505050;-webkit-text-stroke:0.25px #505050">Список литературы</div></div>
<div class="t " style="left:8.50px;top:171.19px;font-size:10px;color:#505050;">2</div>
<svg style="left:6px;top:182.25px" width="8" height="7" viewBox="0 0 8 7"><path d="M5 0.3 L5.8 2.4 L8 2.5 L6.3 3.9 L6.9 6.2 L5 4.9 L3.1 6.2 L3.7 3.9 L2 2.5 L4.2 2.4 Z" fill="#555"/><path d="M0.3 1.5 H1.6 M0.5 3 H1.8 M0.3 4.5 H1.6" stroke="#888" stroke-width="0.5"/></svg>
<div class="a" style="left:24.8px;top:243.10000000000002px;width:815px;height:458.4px;transform:scale(0.12025);transform-origin:0 0;overflow:hidden"><div class="a" style="left:0;top:0;width:815px;height:458.4px;background:#a5b72a"></div><div class="a" style="left:15.3px;top:16px;width:784px;height:427px;background:#fff"></div><div class="t" style="left:0px;top:65px;font-size:34.3px;color:#9fb42c;width:815px;text-align:center;-webkit-text-stroke:0.4px #9fb42c">Человек, как субъект</div><div class="a" style="left:84px;top:152px;width:5px;height:5px;border-radius:50%;background:#a5b72a"></div><div class="a" style="left:93px;top:146px;width:420px;font-size:12.5px;line-height:14.5px;color:#404040;-webkit-text-stroke:0.4px #404040;">Человек может рассматриваться как природный, социальный и культурный субъект.</div><div class="a" style="left:84px;top:196px;width:5px;height:5px;border-radius:50%;background:#a5b72a"></div><div class="a" style="left:93px;top:190px;width:420px;font-size:12.5px;line-height:14.5px;color:#404040;-webkit-text-stroke:0.4px #404040;"><b>Природный субъект</b> – это субъект активности в рамках природы, организма и наследственности.</div><div class="a" style="left:84px;top:253px;width:5px;height:5px;border-radius:50%;background:#a5b72a"></div><div class="a" style="left:93px;top:247px;width:420px;font-size:12.5px;line-height:14.5px;color:#404040;-webkit-text-stroke:0.4px #404040;"><b>Социальный субъект</b> – субъект, включенный в систему общественных отношений, выполняющий социальные роли и функции, несущий ответственность.</div><div class="a" style="left:84px;top:322px;width:5px;height:5px;border-radius:50%;background:#a5b72a"></div><div class="a" style="left:93px;top:316px;width:420px;font-size:12.5px;line-height:14.5px;color:#404040;-webkit-text-stroke:0.4px #404040;"><b>Культурный субъект</b> – субъект самостоятельного и ответственного решения собственных проблем на основе норм.</div><svg style="left:0;top:0" width="815" height="458"><g fill="#a5b729" stroke="#7b8a1d" stroke-width="3"><ellipse cx="672" cy="180" rx="97" ry="47"/><ellipse cx="676" cy="273" rx="97" ry="47"/><ellipse cx="676" cy="367" rx="97" ry="47"/></g></svg><div class="a" style="left:600px;top:166px;width:150px;font-size:12px;line-height:14px;color:#f4f6e0;-webkit-text-stroke:0.4px #f4f6e0;text-align:center">Культурный<br>субъект</div><div class="a" style="left:604px;top:259px;width:150px;font-size:12px;line-height:14px;color:#f4f6e0;-webkit-text-stroke:0.4px #f4f6e0;text-align:center">Социальный<br>субъект</div><div class="a" style="left:604px;top:353px;width:150px;font-size:12px;line-height:14px;color:#f4f6e0;-webkit-text-stroke:0.4px #f4f6e0;text-align:center">Природный<br>субъект</div></div>
<div class="t " style="left:8.50px;top:241.64px;font-size:10px;color:#505050;">3</div>
<svg style="left:6px;top:252.70000000000002px" width="8" height="7" viewBox="0 0 8 7"><path d="M5 0.3 L5.8 2.4 L8 2.5 L6.3 3.9 L6.9 6.2 L5 4.9 L3.1 6.2 L3.7 3.9 L2 2.5 L4.2 2.4 Z" fill="#555"/><path d="M0.3 1.5 H1.6 M0.5 3 H1.8 M0.3 4.5 H1.6" stroke="#888" stroke-width="0.5"/></svg>
<div class="a" style="left:22.7px;top:311.1px;width:102.2px;height:59.9px;border:1.9px solid #7f0f19;box-shadow:0 0 0 1px rgba(255,255,255,0.45)"></div>
<div class="a" style="left:24.8px;top:313.55px;width:815px;height:458.4px;transform:scale(0.12025);transform-origin:0 0;overflow:hidden"><div class="a" style="left:0;top:0;width:815px;height:458.8px;background:#a5b72a"></div><div class="a" style="left:15.3px;top:16px;width:784px;height:427.3px;background:#fff"></div><div class="a" style="left:86.2px;top:147.4px;width:4.4px;height:4.4px;border-radius:50%;background:#a5b72a"></div><div class="a" style="left:86.2px;top:231.3px;width:4.4px;height:4.4px;border-radius:50%;background:#a5b72a"></div><div class="a" style="left:86.2px;top:296.3px;width:4.4px;height:4.4px;border-radius:50%;background:#a5b72a"></div><svg style="left:0;top:0" width="815" height="458.8" viewBox="0 0 815 458.8"><g fill="#a5b729" stroke="#7b8a1d" stroke-width="2"><ellipse cx="641.2" cy="170" rx="96" ry="45.8"/><ellipse cx="646.2" cy="266.5" rx="96" ry="46"/><ellipse cx="645.8" cy="361.2" rx="95.4" ry="47"/></g><g fill="none" stroke="#7b8a1d" stroke-width="5"><ellipse cx="644.3" cy="270.4" rx="140.6" ry="165.4"/><ellipse cx="643.3" cy="216.6" rx="123" ry="103.6"/></g></svg><div class="t" style="left:142px;top:47.0px;font-size:34.3px;color:#9fb42c;letter-spacing:0.5px;-webkit-text-stroke:0.5px #9fb42c">Три варианта понимания объема</div><div class="t" style="left:331px;top:87.2px;font-size:34.3px;color:#9fb42c;letter-spacing:0.5px;-webkit-text-stroke:0.5px #9fb42c">личности</div><div class="t" style="left:98.2px;top:140.6px;font-size:16.3px;color:#161616;letter-spacing:0.5px;-webkit-text-stroke:0.45px #161616">Личность в широком смысле слова –</div><div class="t" style="left:98.2px;top:158.1px;font-size:16.3px;color:#161616;letter-spacing:0.5px;-webkit-text-stroke:0.45px #161616">это перечень всех свойств человека</div><div class="t" style="left:98.2px;top:175.7px;font-size:16.3px;color:#161616;letter-spacing:0.5px;-webkit-text-stroke:0.45px #161616">(природный, социальный и культурный</div><div class="t" style="left:98.2px;top:193.5px;font-size:16.3px;color:#161616;letter-spacing:0.5px;-webkit-text-stroke:0.45px #161616">субъект)</div><div class="t" style="left:98.2px;top:224.6px;font-size:16.3px;color:#161616;letter-spacing:0.5px;-webkit-text-stroke:0.45px #161616">Личность в общепринятом смысле</div><div class="t" style="left:98.2px;top:242.2px;font-size:16.3px;color:#161616;letter-spacing:0.5px;-webkit-text-stroke:0.45px #161616">этого слова – социальный и культурный</div><div class="t" style="left:98.2px;top:259.9px;font-size:16.3px;color:#161616;letter-spacing:0.5px;-webkit-text-stroke:0.45px #161616">субъект.</div><div class="t" style="left:98.2px;top:289.7px;font-size:16.3px;color:#161616;letter-spacing:0.5px;-webkit-text-stroke:0.45px #161616">Личность в точном смысле слова</div><div class="t" style="left:98.2px;top:307.5px;font-size:16.3px;color:#161616;letter-spacing:0.5px;-webkit-text-stroke:0.45px #161616">субъект  самостоятельного и</div><div class="t" style="left:98.2px;top:325.2px;font-size:16.3px;color:#161616;letter-spacing:0.5px;-webkit-text-stroke:0.45px #161616">ответственного решения собственных</div><div class="t" style="left:98.2px;top:342.8px;font-size:16.3px;color:#161616;letter-spacing:0.5px;-webkit-text-stroke:0.45px #161616">проблем на основе общечеловеческих</div><div class="t" style="left:98.2px;top:360.5px;font-size:16.3px;color:#161616;letter-spacing:0.5px;-webkit-text-stroke:0.45px #161616">норм (культурный субъект).</div><div class="t" style="left:602.2px;top:153.8px;font-size:14.2px;color:#fbfbf2;letter-spacing:0.5px;-webkit-text-stroke:0.45px #fbfbf2">Культурный</div><div class="t" style="left:614.7px;top:171.6px;font-size:14.2px;color:#fbfbf2;letter-spacing:0.5px;-webkit-text-stroke:0.45px #fbfbf2">субъект</div><div class="t" style="left:604px;top:249.0px;font-size:14.2px;color:#fbfbf2;letter-spacing:0.5px;-webkit-text-stroke:0.45px #fbfbf2">Социальный</div><div class="t" style="left:620px;top:266.8px;font-size:14.2px;color:#fbfbf2;letter-spacing:0.5px;-webkit-text-stroke:0.45px #fbfbf2">субъект</div><div class="t" style="left:607.5px;top:346.0px;font-size:14.2px;color:#fbfbf2;letter-spacing:0.5px;-webkit-text-stroke:0.45px #fbfbf2">Природный</div><div class="t" style="left:620.4px;top:363.8px;font-size:14.2px;color:#fbfbf2;letter-spacing:0.5px;-webkit-text-stroke:0.45px #fbfbf2">субъект</div></div>
<div class="t " style="left:8.50px;top:312.09px;font-size:10px;color:#d24726;">4</div>
<svg style="left:6px;top:323.15000000000003px" width="8" height="7" viewBox="0 0 8 7"><path d="M5 0.3 L5.8 2.4 L8 2.5 L6.3 3.9 L6.9 6.2 L5 4.9 L3.1 6.2 L3.7 3.9 L2 2.5 L4.2 2.4 Z" fill="#555"/><path d="M0.3 1.5 H1.6 M0.5 3 H1.8 M0.3 4.5 H1.6" stroke="#888" stroke-width="0.5"/></svg>
<div class="a" style="left:24.8px;top:384.0px;width:815px;height:458.4px;transform:scale(0.12025);transform-origin:0 0;overflow:hidden"><div class="a" style="left:0;top:0;width:815px;height:458.4px;background:#a5b72a"></div><div class="a" style="left:15.3px;top:16px;width:784px;height:427px;background:#fff"></div><div class="t" style="left:0px;top:64px;font-size:34.3px;color:#9fb42c;width:815px;text-align:center;-webkit-text-stroke:0.4px #9fb42c">Определение понятия личность</div><div class="a" style="left:86px;top:157px;width:5px;height:5px;border-radius:50%;background:#a5b72a"></div><div class="a" style="left:96px;top:146px;width:262px;font-size:16.5px;line-height:20.8px;color:#454545;-webkit-text-stroke:0.4px #454545;"><b>Личность</b> – это человек, взятый в системе таких его психологических характеристик, которые социально обусловлены, проявляются в общественных по природе связях и отношениях, являются устойчивыми, определяют нравственные поступки человека, имеющие значение для него самого.</div><svg style="left:381px;top:145px;overflow:hidden" width="376" height="249" viewBox="0 0 376 249"><rect width="376" height="249" fill="#80949b"/><circle cx="4" cy="63" r="6" fill="#5b5b5b"/><rect x="-3" y="70" width="14" height="135" rx="4" fill="#8a8a8a"/><rect x="2" y="71" width="4" height="20" fill="#ddd"/><circle cx="20" cy="64" r="6" fill="#5b5b5b"/><rect x="13" y="71" width="14" height="135" rx="4" fill="#3a3a3a"/><rect x="18" y="72" width="4" height="20" fill="#ddd"/><circle cx="36" cy="59" r="6" fill="#5b5b5b"/><rect x="29" y="66" width="14" height="135" rx="4" fill="#5a5a5a"/><rect x="34" y="67" width="4" height="20" fill="#ddd"/><circle cx="52" cy="63" r="6" fill="#5b5b5b"/><rect x="45" y="70" width="14" height="135" rx="4" fill="#3a3a3a"/><rect x="50" y="71" width="4" height="20" fill="#ddd"/><circle cx="68" cy="66" r="6" fill="#5b5b5b"/><rect x="61" y="73" width="14" height="135" rx="4" fill="#b5b5b5"/><rect x="66" y="74" width="4" height="20" fill="#ddd"/><circle cx="84" cy="58" r="6" fill="#5b5b5b"/><rect x="77" y="65" width="14" height="135" rx="4" fill="#5a5a5a"/><rect x="82" y="66" width="4" height="20" fill="#ddd"/><circle cx="100" cy="64" r="6" fill="#5b5b5b"/><rect x="93" y="71" width="14" height="135" rx="4" fill="#d0d0d0"/><rect x="98" y="72" width="4" height="20" fill="#ddd"/><circle cx="116" cy="59" r="6" fill="#5b5b5b"/><rect x="109" y="66" width="14" height="135" rx="4" fill="#b5b5b5"/><rect x="114" y="67" width="4" height="20" fill="#ddd"/><circle cx="132" cy="59" r="6" fill="#5b5b5b"/><rect x="125" y="66" width="14" height="135" rx="4" fill="#d0d0d0"/><rect x="130" y="67" width="4" height="20" fill="#ddd"/><circle cx="260" cy="58" r="6" fill="#5b5b5b"/><rect x="253" y="65" width="14" height="135" rx="4" fill="#5a5a5a"/><rect x="258" y="66" width="4" height="20" fill="#ddd"/><circle cx="276" cy="61" r="6" fill="#5b5b5b"/><rect x="269" y="68" width="14" height="135" rx="4" fill="#3a3a3a"/><rect x="274" y="69" width="4" height="20" fill="#ddd"/><circle cx="292" cy="64" r="6" fill="#5b5b5b"/><rect x="285" y="71" width="14" height="135" rx="4" fill="#3a3a3a"/><rect x="290" y="72" width="4" height="20" fill="#ddd"/><circle cx="308" cy="61" r="6" fill="#5b5b5b"/><rect x="301" y="68" width="14" height="135" rx="4" fill="#3a3a3a"/><rect x="306" y="69" width="4" height="20" fill="#ddd"/><circle cx="324" cy="66" r="6" fill="#5b5b5b"/><rect x="317" y="73" width="14" height="135" rx="4" fill="#8a8a8a"/><rect x="322" y="74" width="4" height="20" fill="#ddd"/><circle cx="340" cy="62" r="6" fill="#5b5b5b"/><rect x="333" y="69" width="14" height="135" rx="4" fill="#d0d0d0"/><rect x="338" y="70" width="4" height="20" fill="#ddd"/><circle cx="356" cy="60" r="6" fill="#5b5b5b"/><rect x="349" y="67" width="14" height="135" rx="4" fill="#5a5a5a"/><rect x="354" y="68" width="4" height="20" fill="#ddd"/><circle cx="372" cy="62" r="6" fill="#5b5b5b"/><rect x="365" y="69" width="14" height="135" rx="4" fill="#8a8a8a"/><rect x="370" y="70" width="4" height="20" fill="#ddd"/><circle cx="12" cy="73" r="6" fill="#5b5b5b"/><rect x="5" y="80" width="14" height="123" rx="4" fill="#b5b5b5"/><rect x="10" y="81" width="4" height="20" fill="#ddd"/><circle cx="28" cy="77" r="6" fill="#5b5b5b"/><rect x="21" y="84" width="14" height="123" rx="4" fill="#5a5a5a"/><rect x="26" y="85" width="4" height="20" fill="#ddd"/><circle cx="44" cy="80" r="6" fill="#5b5b5b"/><rect x="37" y="87" width="14" height="123" rx="4" fill="#5a5a5a"/><rect x="42" y="88" width="4" height="20" fill="#ddd"/><circle cx="60" cy="72" r="6" fill="#5b5b5b"/><rect x="53" y="79" width="14" height="123" rx="4" fill="#b5b5b5"/><rect x="58" y="80" width="4" height="20" fill="#ddd"/><circle cx="76" cy="79" r="6" fill="#5b5b5b"/><rect x="69" y="86" width="14" height="123" rx="4" fill="#d0d0d0"/><rect x="74" y="87" width="4" height="20" fill="#ddd"/><circle cx="92" cy="77" r="6" fill="#5b5b5b"/><rect x="85" y="84" width="14" height="123" rx="4" fill="#2e2e2e"/><rect x="90" y="85" width="4" height="20" fill="#ddd"/><circle cx="108" cy="79" r="6" fill="#5b5b5b"/><rect x="101" y="86" width="14" height="123" rx="4" fill="#6e6e6e"/><rect x="106" y="87" width="4" height="20" fill="#ddd"/><circle cx="124" cy="76" r="6" fill="#5b5b5b"/><rect x="117" y="83" width="14" height="123" rx="4" fill="#b5b5b5"/><rect x="122" y="84" width="4" height="20" fill="#ddd"/><circle cx="268" cy="74" r="6" fill="#5b5b5b"/><rect x="261" y="81" width="14" height="123" rx="4" fill="#b5b5b5"/><rect x="266" y="82" width="4" height="20" fill="#ddd"/><circle cx="284" cy="73" r="6" fill="#5b5b5b"/><rect x="277" y="80" width="14" height="123" rx="4" fill="#474747"/><rect x="282" y="81" width="4" height="20" fill="#ddd"/><circle cx="300" cy="80" r="6" fill="#5b5b5b"/><rect x="293" y="87" width="14" height="123" rx="4" fill="#2e2e2e"/><rect x="298" y="88" width="4" height="20" fill="#ddd"/><circle cx="316" cy="77" r="6" fill="#5b5b5b"/><rect x="309" y="84" width="14" height="123" rx="4" fill="#2e2e2e"/><rect x="314" y="85" width="4" height="20" fill="#ddd"/><circle cx="332" cy="76" r="6" fill="#5b5b5b"/><rect x="325" y="83" width="14" height="123" rx="4" fill="#5a5a5a"/><rect x="330" y="84" width="4" height="20" fill="#ddd"/><circle cx="348" cy="73" r="6" fill="#5b5b5b"/><rect x="341" y="80" width="14" height="123" rx="4" fill="#d0d0d0"/><rect x="346" y="81" width="4" height="20" fill="#ddd"/><circle cx="364" cy="74" r="6" fill="#5b5b5b"/><rect x="357" y="81" width="14" height="123" rx="4" fill="#6e6e6e"/><rect x="362" y="82" width="4" height="20" fill="#ddd"/><circle cx="380" cy="74" r="6" fill="#5b5b5b"/><rect x="373" y="81" width="14" height="123" rx="4" fill="#2e2e2e"/><rect x="378" y="82" width="4" height="20" fill="#ddd"/><path d="M162 0 H218 L254 246 H136 Z" fill="#e6e82e" fill-opacity="0.85"/><ellipse cx="195" cy="240" rx="60" ry="9" fill="#eceb2a"/><rect x="178" y="78" width="32" height="80" rx="8" fill="#4f6e86"/><rect x="182" y="150" width="10" height="80" fill="#4f6e86"/><rect x="196" y="150" width="10" height="80" fill="#4f6e86"/><circle cx="194" cy="62" r="13" fill="#e3a36f"/><path d="M181 55 C185 43 203 43 207 55 Z" fill="#c46a3a"/></svg></div>
<div class="t " style="left:8.50px;top:382.54px;font-size:10px;color:#505050;">5</div>
<svg style="left:6px;top:393.6px" width="8" height="7" viewBox="0 0 8 7"><path d="M5 0.3 L5.8 2.4 L8 2.5 L6.3 3.9 L6.9 6.2 L5 4.9 L3.1 6.2 L3.7 3.9 L2 2.5 L4.2 2.4 Z" fill="#555"/><path d="M0.3 1.5 H1.6 M0.5 3 H1.8 M0.3 4.5 H1.6" stroke="#888" stroke-width="0.5"/></svg>
<div class="a" style="left:24.8px;top:454.45px;width:815px;height:458.4px;transform:scale(0.12025);transform-origin:0 0;overflow:hidden"><div class="a" style="left:0;top:0;width:815px;height:458.4px;background:#a5b72a"></div><div class="a" style="left:15.3px;top:16px;width:784px;height:427px;background:#fff"></div><div class="t" style="left:0px;top:49px;font-size:34.3px;color:#9fb42c;width:815px;text-align:center;-webkit-text-stroke:0.4px #9fb42c">Мотивационно-потребностная сфера</div><div class="t" style="left:0px;top:91px;font-size:34.3px;color:#9fb42c;width:815px;text-align:center;-webkit-text-stroke:0.4px #9fb42c">личности</div><div class="a" style="left:84px;top:152px;width:5px;height:5px;border-radius:50%;background:#a5b72a"></div><div class="a" style="left:93px;top:146px;width:432px;font-size:12.8px;line-height:15px;color:#404040;-webkit-text-stroke:0.4px #404040;">Потребность – это нужда организма в чем-либо, что лежит вне его и составляет необходимый момент его нормальной жизнедеятельности, развития личности и общества в целом, источник активности и побуждения к деятельности человека.</div><div class="a" style="left:84px;top:235px;width:5px;height:5px;border-radius:50%;background:#a5b72a"></div><div class="a" style="left:93px;top:229px;width:432px;font-size:12.8px;line-height:15px;color:#404040;-webkit-text-stroke:0.4px #404040;">Мотив – предмет, который отвечает той или иной потребности и который, в той или иной форме отражаясь субъектом, ведет его деятельность, побуждает и направляет её на достижение цели субъекта в процессе жизнедеятельности.</div><div class="a" style="left:84px;top:320px;width:5px;height:5px;border-radius:50%;background:#a5b72a"></div><div class="a" style="left:93px;top:314px;width:432px;font-size:12.8px;line-height:15px;color:#404040;-webkit-text-stroke:0.4px #404040;">Интерес – эмоционально окрашенная познавательная потребность человека, придающая его деятельности целенаправленный характер и способствующая ориентации в окружающей действительности, знакомству с новыми фактами.</div><svg style="left:0;top:0" width="815" height="458"><path d="M510 137 C530 137 535 141 535 159 V262 C535 270 540 275 565 275 C540 275 535 280 535 288 V395 C535 412 530 415 510 415" fill="none" stroke="#a5b72a" stroke-width="4"/></svg><div class="a" style="left:580px;top:242px;width:202px;font-size:11.5px;line-height:15px;color:#707070;-webkit-text-stroke:0.4px #707070;text-align:center">Потребности, мотивы, интересы, установки, убеждения — основные компоненты мотивационной сферы личности человека</div></div>
<div class="t " style="left:8.50px;top:452.99px;font-size:10px;color:#505050;">6</div>
<svg style="left:6px;top:464.05px" width="8" height="7" viewBox="0 0 8 7"><path d="M5 0.3 L5.8 2.4 L8 2.5 L6.3 3.9 L6.9 6.2 L5 4.9 L3.1 6.2 L3.7 3.9 L2 2.5 L4.2 2.4 Z" fill="#555"/><path d="M0.3 1.5 H1.6 M0.5 3 H1.8 M0.3 4.5 H1.6" stroke="#888" stroke-width="0.5"/></svg>
<div class="a" style="left:24.8px;top:524.9000000000001px;width:815px;height:458.4px;transform:scale(0.12025);transform-origin:0 0;overflow:hidden"><div class="a" style="left:0;top:0;width:815px;height:458.4px;background:#a5b72a"></div><div class="a" style="left:15.3px;top:16px;width:784px;height:427px;background:#fff"></div><div class="t" style="left:0px;top:60px;font-size:34.3px;color:#9fb42c;width:815px;text-align:center;-webkit-text-stroke:0.4px #9fb42c">Мотивация и мотивировка</div><div class="a" style="left:84px;top:148px;width:5px;height:5px;border-radius:50%;background:#a5b72a"></div><div class="a" style="left:93px;top:142px;width:615px;font-size:13.5px;line-height:15.8px;color:#404040;-webkit-text-stroke:0.4px #404040;"><b>Мотивация</b> – это совокупность причин психологического характера, объясняющих поведение человека, его начало, направленность и активность. Мотивация – это процесс непрерывного выбора и принятия решений на основе взвешивания поведенческих альтернатив. Мотивация объясняет целенаправленность действия, организованность и устойчивость целостной деятельности.</div><div class="a" style="left:84px;top:232px;width:5px;height:5px;border-radius:50%;background:#a5b72a"></div><div class="a" style="left:93px;top:226px;width:615px;font-size:13.5px;line-height:15.8px;color:#404040;-webkit-text-stroke:0.4px #404040;"><b>Мотивировка</b> – это рациональное объяснение субъектом причин действия посредством указания на социально приемлемые для него и для общества обстоятельства, побудившие к выбору данного действия и поступка.</div></div>
<div class="t " style="left:8.50px;top:523.44px;font-size:10px;color:#505050;">7</div>
<svg style="left:6px;top:534.5000000000001px" width="8" height="7" viewBox="0 0 8 7"><path d="M5 0.3 L5.8 2.4 L8 2.5 L6.3 3.9 L6.9 6.2 L5 4.9 L3.1 6.2 L3.7 3.9 L2 2.5 L4.2 2.4 Z" fill="#555"/><path d="M0.3 1.5 H1.6 M0.5 3 H1.8 M0.3 4.5 H1.6" stroke="#888" stroke-width="0.5"/></svg>
<div class="a" style="left:24.8px;top:595.35px;width:815px;height:458.4px;transform:scale(0.12025);transform-origin:0 0;overflow:hidden"><div class="a" style="left:0;top:0;width:815px;height:458.4px;background:#a5b72a"></div><div class="a" style="left:15.3px;top:16px;width:784px;height:427px;background:#fff"></div></div>
<div class="t " style="left:8.50px;top:593.88px;font-size:10px;color:#505050;">8</div>
<div class="a" style="left:137.3px;top:89px;width:11.5px;height:510px;background:#f0f0f0"></div>
<div class="a" style="left:137.3px;top:89px;width:11.5px;height:297.5px;background:#fff;border:1px solid #c4c4c4"></div>
<div class="a" style="left:137.3px;top:100px;width:11.5px;height:1px;background:#c4c4c4"></div>
<svg style="left:140px;top:92.5px" width="6" height="4"><path d="M0.5 3.5 L3 0.5 L5.5 3.5 Z" fill="#333"/></svg>
<div class="a" style="left:137.3px;top:587.2px;width:11.5px;height:11.6px;background:#fff;border:1px solid #c4c4c4"></div>
<svg style="left:140px;top:591px" width="6" height="4"><path d="M0.5 0.5 L3 3.5 L5.5 0.5 Z" fill="#333"/></svg>
<div class="a" style="left:148.8px;top:89px;width:2.5px;height:510px;background:#dcdcdc"></div>
<div class="a" style="left:151.3px;top:89px;width:1px;height:508.5px;background:#d4d4d4"></div>
<div class="a" style="left:988px;top:89px;width:12px;height:460px;background:#f0f0f0"></div>
<div class="a" style="left:988px;top:89px;width:12px;height:11px;background:#fff;border:1px solid #c4c4c4"></div>
<svg style="left:991px;top:92.5px" width="6" height="4"><path d="M0.5 3.5 L3 0.5 L5.5 3.5 Z" fill="#333"/></svg>
<div class="a" style="left:988px;top:212px;width:12px;height:37.5px;background:#fff;border:1px solid #c4c4c4"></div>
<div class="a" style="left:988px;top:548.3px;width:12px;height:11.2px;background:#fff;border:1px solid #c4c4c4"></div>
<svg style="left:991px;top:552.3px" width="6" height="4"><path d="M0.5 0.5 L3 3.5 L5.5 0.5 Z" fill="#333"/></svg>
<svg style="left:989px;top:560px" width="10" height="23" viewBox="0 0 10 23"><g fill="#666"><path d="M5 1 L8.5 5.5 H1.5 Z M5 4.5 L8.5 9.5 H1.5 Z"/><path d="M1.5 13 H8.5 L5 18 Z M1.5 17 H8.5 L5 22 Z"/></g></svg>
<div class="a" style="left:151.3px;top:597.3px;width:837px;height:1px;background:#d4d4d4"></div>
<div class="a" style="left:0;top:599.5px;width:1000px;height:14.6px;background:#f3f3f3"></div>
<div class="a" style="left:0;top:614.1px;width:1000px;height:3px;background:#f4dccb"></div>
<div class="t " style="letter-spacing:-0.040px;left:5.00px;top:604.69px;font-size:7.1px;color:#444;">Слайд 4 из 12</div>
<svg style="left:63px;top:601.5px" width="11" height="10" viewBox="0 0 11 10"><path d="M0.5 0.8 H4.3 V9.2 H0.5 Z M4.3 0.8 H9.8 V9.2 H4.3" fill="none" stroke="#8a8a8a" stroke-width="0.8"/><path d="M6 3.8 L8.6 6.4 M8.6 3.8 L6 6.4" stroke="#555" stroke-width="0.9"/></svg>
<div class="t " style="letter-spacing:0.272px;left:85.00px;top:604.69px;font-size:7.1px;color:#444;">русский</div>
<svg style="left:122px;top:602px" width="11" height="11" viewBox="0 0 11 11"><path d="M4.5 0.8 C1.8 1.5 0.6 4.5 1.6 7 C2.3 8.5 3.5 9.3 5 9.6" fill="none" stroke="#555" stroke-width="0.9"/><circle cx="6.2" cy="1.4" r="0.9" fill="#555"/><path d="M3.5 4.2 L6.2 5 L8.8 3.8 M6.2 5 V7" fill="none" stroke="#555" stroke-width="0.8"/><path d="M5.2 6.5 L9.8 10.8 M9.8 6.5 L5.2 10.8" stroke="#444" stroke-width="0.9"/></svg>
<div class="t " style="letter-spacing:0.092px;left:134.70px;top:604.69px;font-size:7.1px;color:#444;">Специальные возможности: проверьте рекомендации</div>
<svg style="left:633px;top:602px" width="9" height="9" viewBox="0 0 9 9"><path d="M0 4 H9 M0 6.2 H9 M0 8.4 H9" stroke="#666" stroke-width="0.8"/><path d="M2.5 2.5 L4.5 0.5 L6.5 2.5" fill="none" stroke="#666" stroke-width="0.8"/></svg>
<div class="t " style="letter-spacing:0.127px;left:644.70px;top:604.69px;font-size:7.1px;color:#333;">Заметки</div>
<svg style="left:685px;top:601.5px" width="11" height="10" viewBox="0 0 11 10"><path d="M0.5 0.5 H10.5 V7 H4 L1.8 9.5 V7 H0.5 Z" fill="#444"/></svg>
<div class="t " style="letter-spacing:0.070px;left:698.00px;top:604.69px;font-size:7.1px;color:#333;">Примечания</div>
<div class="a" style="left:752px;top:599.3px;width:27.8px;height:14.8px;background:#c8c8c8"></div>
<svg style="left:761px;top:601.5px" width="10" height="10" viewBox="0 0 10 10"><rect x="0.5" y="0.5" width="9" height="8.5" rx="0.8" fill="none" stroke="#666" stroke-width="0.8"/><path d="M2.5 0.5 V9 M2.5 7.3 H9.5 M4.5 2.5 H7.3 V5.5 H4.5 Z" fill="none" stroke="#666" stroke-width="0.8"/></svg>
<svg style="left:789.5px;top:601.5px" width="10" height="10" viewBox="0 0 10 10"><g fill="none" stroke="#777" stroke-width="0.8"><rect x="0.5" y="0.5" width="3.8" height="3.8"/><rect x="5.7" y="0.5" width="3.8" height="3.8"/><rect x="0.5" y="5.7" width="3.8" height="3.8"/><rect x="5.7" y="5.7" width="3.8" height="3.8"/></g></svg>
<svg style="left:817px;top:601.5px" width="10" height="10" viewBox="0 0 10 10"><g fill="none" stroke="#777" stroke-width="0.8"><path d="M5 1.5 V9.5 M5 1.5 C3.5 0.5 2 0.5 0.5 1 V9 C2 8.5 3.5 8.5 5 9.5 C6.5 8.5 8 8.5 9.5 9 V1 C8 0.5 6.5 0.5 5 1.5 M1.8 3 H3.6 M1.8 5 H3.6 M6.4 3 H8.2 M6.4 5 H8.2"/></g></svg>
<svg style="left:843.5px;top:601.5px" width="10" height="10" viewBox="0 0 10 10"><g fill="none" stroke="#777" stroke-width="0.8"><path d="M0.5 1 H9.5 M1.5 1 V6 H8.5 V1 M5 6 V8 M3 9.5 L5 8 L7 9.5 M3.5 3.5 H6.5"/></g></svg>
<div class="a" style="left:866.5px;top:606px;width:5.5px;height:0.9px;background:#555"></div>
<div class="a" style="left:876px;top:605.6px;width:68px;height:1.5px;background:#666"></div>
<div class="a" style="left:905.6px;top:602.9px;width:4.6px;height:7.4px;background:#444"></div>
<div class="a" style="left:909px;top:605.2px;width:2px;height:2.2px;background:#444"></div>
<svg style="left:947.5px;top:603px" width="7" height="7"><path d="M3.5 0.5 V6.5 M0.5 3.5 H6.5" stroke="#555" stroke-width="0.9"/></svg>
<div class="t " style="letter-spacing:0.409px;left:961.40px;top:604.69px;font-size:7.1px;color:#444;">92 %</div>
<svg style="left:988.5px;top:601.5px" width="9" height="9" viewBox="0 0 9 9"><g fill="none" stroke="#777" stroke-width="0.8"><rect x="0.5" y="0.5" width="8" height="8" stroke="#999"/><path d="M4.5 0.5 V3 M4.5 6 V8.5 M0.5 4.5 H3 M6 4.5 H8.5" stroke="#777"/></g></svg>
</div></body></html>
